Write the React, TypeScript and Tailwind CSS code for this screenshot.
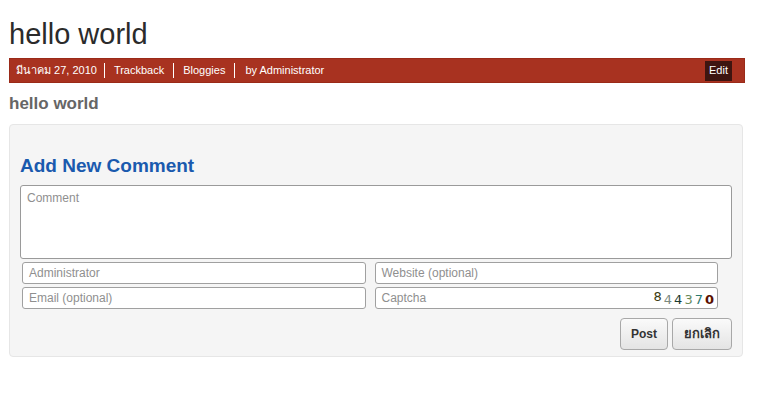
import React from 'react';

const font = { fontFamily: '"Liberation Sans", Arial, "Noto Sans", sans-serif' };

function Field({ placeholder, extra }: { placeholder: string; extra?: React.ReactNode }) {
  return (
    <div className="flex-1 h-[22px] bg-white border border-[#a0a0a0] rounded-[3px] flex items-center pl-[6px] pr-[3px] text-[12px] text-[#8f8f8f]">
      <span className="flex-1">{placeholder}</span>
      {extra}
    </div>
  );
}

export default function App() {
  const captcha = [
    { c: '8', color: 'text-[#3a3a10]', shift: '-translate-y-[3px]' },
    { c: '4', color: 'text-[#7a8a80]', shift: '' },
    { c: '4', color: 'text-[#1a3a30]', shift: '' },
    { c: '3', color: 'text-[#6a8a5a]', shift: '' },
    { c: '7', color: 'text-[#2a7a70]', shift: '' },
    { c: '0', color: 'text-[#5a1000] font-bold', shift: '' },
  ];

  return (
    <div className="w-[763px] h-[405px] bg-white overflow-hidden" style={font}>
      <div className="pl-[9px] pr-[18px] pt-[17px]">
        <h1 className="text-[29px] leading-[34px] text-[#2b2b2b]">hello world</h1>

        {/* Post meta bar */}
        <div className="mt-[7px] h-[25px] bg-[#a83220] border border-[#9a2a18] flex items-center justify-between pl-[6px] pr-[12px] text-white text-[11px]">
          <div className="flex items-center">
            <span className="pr-[7px]">มีนาคม 27, 2010</span>
            <span className="w-px h-[15px] bg-white" />
            <span className="px-[9px]">Trackback</span>
            <span className="w-px h-[15px] bg-white" />
            <span className="px-[9px]">Bloggies</span>
            <span className="w-px h-[15px] bg-white" />
            <span className="px-[10px]">by Administrator</span>
          </div>
          <span className="bg-[#3e1510] px-[4px] h-[20px] flex items-center">Edit</span>
        </div>

        <h2 className="mt-[10px] text-[17px] leading-[22px] font-bold text-[#666]">hello world</h2>

        {/* Comment form */}
        <div className="mt-[9px] mr-[2px] bg-[#f5f5f5] border border-[#e6e6e6] rounded-[4px] pl-[10px] pr-[10px] pt-[29px] pb-[6px]">
          <h3 className="text-[19px] leading-[24px] font-bold text-[#1a5aae]">Add New Comment</h3>
          <div className="mt-[7px] h-[74px] bg-white border border-[#9a9a9a] rounded-[3px] px-[6px] pt-[3px] text-[12px] text-[#8f8f8f]">
            Comment
          </div>
          <div className="pl-[2px] pr-[14px]">
            <div className="mt-[3px] flex gap-[9px]">
              <Field placeholder="Administrator" />
              <Field placeholder="Website (optional)" />
            </div>
            <div className="mt-[3px] flex gap-[9px]">
              <Field placeholder="Email (optional)" />
              <Field
                placeholder="Captcha"
                extra={
                  <span className="flex items-end gap-[2px] text-[13px] leading-none pt-[2px]" style={{ fontFamily: '"DejaVu Sans", sans-serif' }}>
                    {captcha.map((d, i) => (
                      <span key={i} className={`${d.color} ${d.shift}`}>{d.c}</span>
                    ))}
                  </span>
                }
              />
            </div>
          </div>
          <div className="mt-[9px] flex justify-end gap-[4px]">
            <button className="h-[32px] px-[10px] rounded-[4px] border border-[#a8a8a8] bg-gradient-to-b from-[#fafafa] to-[#e4e4e4] text-[12px] font-bold text-[#333]">
              Post
            </button>
            <button className="h-[32px] px-[11px] rounded-[4px] border border-[#a8a8a8] bg-gradient-to-b from-[#fafafa] to-[#e4e4e4] text-[13px] font-bold text-[#333]">
              ยกเลิก
            </button>
          </div>
        </div>
      </div>
    </div>
  );
}
